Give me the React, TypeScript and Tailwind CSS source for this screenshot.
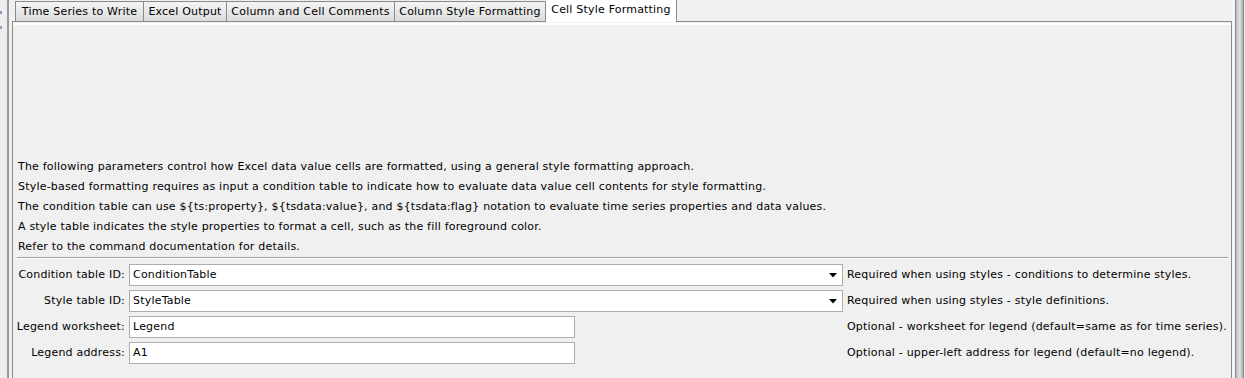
import React from "react";

const font = { fontFamily: '"DejaVu Sans", "Liberation Sans", sans-serif' };

function Tab({ label, className }: { label: string; className: string }) {
  return (
    <div
      className={`h-[21px] flex items-center justify-center pt-[2px] border-t border-b border-[#8a8a8a] bg-gradient-to-b from-[#f4f4f4] to-[#dcdcdc] text-[11px] tracking-[0.2px] text-black whitespace-nowrap ${className}`}
    >
      {label}
    </div>
  );
}

function Combo({ value }: { value: string }) {
  return (
    <div className="h-[22px] w-[714px] bg-white border border-[#adadad] flex items-center pl-[3px] pr-[5px]">
      <span className="flex-1 text-[11px] tracking-[0.2px]">{value}</span>
      <svg width="8" height="5" viewBox="0 0 8 5" className="mt-[1px]">
        <path d="M0 0 H8 L4 4.5 Z" fill="#000" />
      </svg>
    </div>
  );
}

function Field({ value }: { value: string }) {
  return (
    <div className="h-[22px] w-[446px] bg-white border border-[#adadad] flex items-center pl-[3px]">
      <span className="text-[11px] tracking-[0.2px]">{value}</span>
    </div>
  );
}

export default function App() {
  const lines = [
    "The following parameters control how Excel data value cells are formatted, using a general style formatting approach.",
    "Style-based formatting requires as input a condition table to indicate how to evaluate data value cell contents for style formatting.",
    "The condition table can use ${ts:property}, ${tsdata:value}, and ${tsdata:flag} notation to evaluate time series properties and data values.",
    "A style table indicates the style properties to format a cell, such as the fill foreground color.",
    "Refer to the command documentation for details.",
  ];
  const rows = [
    { label: "Condition table ID:", input: <Combo value="ConditionTable" />, desc: "Required when using styles - conditions to determine styles." },
    { label: "Style table ID:", input: <Combo value="StyleTable" />, desc: "Required when using styles - style definitions." },
    { label: "Legend worksheet:", input: <Field value="Legend" />, desc: "Optional - worksheet for legend (default=same as for time series)." },
    { label: "Legend address:", input: <Field value="A1" />, desc: "Optional - upper-left address for legend (default=no legend)." },
  ];
  return (
    <div className="w-[1245px] h-[378px] bg-[#f0f0f0] flex overflow-hidden text-black" style={font}>
      {/* left edge */}
      <div className="w-[12px] h-full flex">
        <div className="w-[7px] h-full bg-[#eeeeee] flex flex-col">
          <div className="mt-[11px] h-[3px] w-[2px] bg-[#7d97c2]" />
          <div className="mt-[12px] h-[3px] w-[2px] bg-[#8aa2c8]" />
        </div>
        <div className="w-[2px] h-full bg-[#9a9a9a]" />
        <div className="w-[3px] h-full bg-[#f0f0f0]" />
      </div>

      {/* main */}
      <div className="w-[1220px] h-full flex flex-col">
        {/* tab row */}
        <div className="h-[22px] flex items-end">
          <div className="w-[3px] h-[1px] bg-[#8a8a8a]" />
          <Tab label="Time Series to Write" className="w-[128px] border-l" />
          <Tab label="Excel Output" className="w-[83px] border-l" />
          <Tab label="Column and Cell Comments" className="w-[168px] border-l" />
          <Tab label="Column Style Formatting" className="w-[152px] border-l border-r" />
          <div className="h-[22px] w-[131px] bg-white border-r border-[#8a8a8a] flex items-center justify-center pb-[2px] text-[11px] tracking-[0.2px] whitespace-nowrap">
            Cell Style Formatting
          </div>
          <div className="flex-1 h-[1px] bg-[#8a8a8a]" />
        </div>

        {/* panel */}
        <div className="flex-1 border-l border-r border-[#8a8a8a] flex flex-col">
          <div className="h-[1px]" />
          <div className="h-[2px] bg-white" />
          <div className="h-[132px]" />
          <div className="pl-[5px] flex flex-col">
            {lines.map((l, i) => (
              <div key={i} className="h-[20px] flex items-center text-[11px] tracking-[0.2px] whitespace-nowrap">
                {l}
              </div>
            ))}
          </div>
          <div className="ml-[4px] mr-[3px] h-[1px] bg-[#a0a0a0]" />
          <div className="ml-[4px] mr-[3px] h-[1px] bg-white" />
          <div className="mt-[5px] ml-[1px] grid grid-cols-[111px_714px_1fr] gap-x-[4px] gap-y-[4px]">
            {rows.map((r, i) => (
              <React.Fragment key={i}>
                <div className="h-[22px] flex items-center justify-end text-[11px] tracking-[0.2px] whitespace-nowrap">{r.label}</div>
                <div className="h-[22px]">{r.input}</div>
                <div className="h-[22px] flex items-center text-[11px] tracking-[0.2px] whitespace-nowrap">{r.desc}</div>
              </React.Fragment>
            ))}
          </div>
        </div>
      </div>

      {/* right edge */}
      <div className="w-[13px] h-full flex">
        <div className="w-[3px] h-full bg-[#f4f4f4]" />
        <div className="w-[1px] h-full bg-[#8a8a8a]" />
        <div className="w-[7px] h-full bg-gradient-to-r from-[#b8b8b8] via-[#e2e2e2] to-[#b0b0b0]" />
        <div className="w-[1px] h-full bg-[#8a8a8a]" />
        <div className="w-[1px] h-full bg-[#e8e8e8]" />
      </div>
    </div>
  );
}
